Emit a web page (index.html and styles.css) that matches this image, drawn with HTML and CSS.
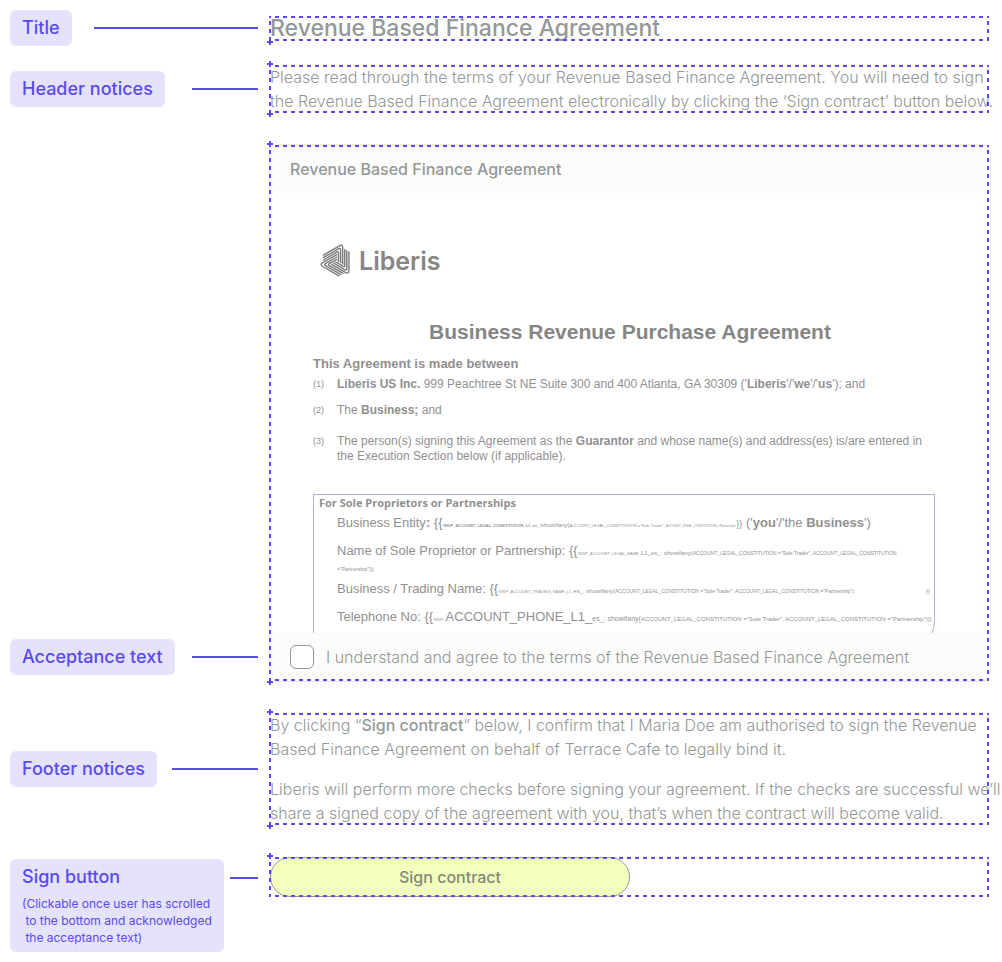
FILE: index.html
```html
<!DOCTYPE html>
<html lang="en">
<head>
<meta charset="UTF-8">
<meta name="viewport" content="width=device-width, initial-scale=1.0">
<title>Revenue Based Finance Agreement</title>
<link rel="stylesheet" href="styles.css">
</head>
<body>
<main class="page">
    <section class="row row-title">
        <div class="callout"><span class="tag">Title</span><i class="line line-title"></i></div>
        <div class="content outlined mark-bottom">
            <h1>Revenue Based Finance Agreement</h1>
        </div>
    </section>

    <section class="row row-header">
        <div class="callout"><span class="tag">Header notices</span><i class="line line-medium"></i></div>
        <div class="content outlined mark-top mark-bottom">
            <p>Please read through the terms of your Revenue Based Finance Agreement. You will need to sign<br>the Revenue Based Finance Agreement electronically by clicking the ‘Sign contract’ button below.</p>
        </div>
    </section>

    <section class="row row-card">
        <div class="callout"><span class="tag">Acceptance text</span><i class="line line-medium"></i></div>
        <div class="content outlined mark-top mark-bottom">
            <div class="card">
                <h2 class="card-header">Revenue Based Finance Agreement</h2>
                <div class="viewer">
                    <div class="logo">
                        <svg width="34" height="36" viewBox="-18 -18 36 36" fill="none" stroke="#7c7c7c" stroke-width="1.5">
                            <defs>
                                <g id="arm">
                                    <path d="M-15 -5.9L2.5 -16Q6 -18 6 -14V3.7"/>
                                    <path d="M-15 -3.3L1.8 -13Q3.8 -14.2 3.8 -11.5V2.4"/>
                                    <path d="M-15 -0.8L0.2 -9.6Q1.6 -10.4 1.6 -8.5V1.2"/>
                                </g>
                            </defs>
                            <use href="#arm"/>
                            <use href="#arm" transform="rotate(120)"/>
                            <use href="#arm" transform="rotate(240)"/>
                        </svg>
                        <span>Liberis</span>
                    </div>
                    <h3>Business Revenue Purchase Agreement</h3>
                    <h4>This Agreement is made between</h4>
                    <ol class="parties">
                        <li><span class="num">(1)</span><span><b>Liberis US Inc.</b> 999 Peachtree St NE Suite 300 and 400 Atlanta, GA 30309 ('<b>Liberis</b>'/'<b>we</b>'/'<b>us</b>'); and</span></li>
                        <li><span class="num">(2)</span><span>The <b>Business;</b> and</span></li>
                        <li><span class="num">(3)</span><span>The person(s) signing this Agreement as the <b>Guarantor</b> and whose name(s) and address(es) is/are entered in<br>the Execution Section below (if applicable).</span></li>
                    </ol>
                    <div class="details">
                        <h5>For Sole Proprietors or Partnerships</h5>
                        <p>Business Entity<b>:</b> {{<small class="t4"><b>!SKIP_ACCOUNT_LEGAL_CONSTITUTION_L1_es_</b></small><small class="t6">:showifany(</small><small class="t4">ACCOUNT_LEGAL_CONSTITUTION ="Sole Trader", </small><small class="t3">ACCOUNT_LEGAL_CONSTITUTION ="Partnership"</small><small class="t9">}}</small> ('<b>you</b>'/'the <b>Business</b>')</p>
                        <p class="wrapped">Name of Sole Proprietor or Partnership: {{<small class="t4">!SKIP_ACCOUNT_LEGAL_NAME_</small><small class="t6">L1_es_: showifany(</small><small class="t5">ACCOUNT_LEGAL_CONSTITUTION ="Sole Trader", ACCOUNT_LEGAL_CONSTITUTION</small><br><small class="t5">="Partnership")}}</small></p>
                        <p class="spread"><span>Business / Trading Name: {{<small class="t4">!SKIP_ACCOUNT_TRADING_NAME_L1_</small><small class="t6">es_: showifany(</small><small class="t5">ACCOUNT_LEGAL_CONSTITUTION ="Sole Trader", ACCOUNT_LEGAL_CONSTITUTION ="Partnership")</small></span><small class="t6">}}</small></p>
                        <p>Telephone No: {{<small class="t4">!SKIP_</small>ACCOUNT_PHONE_L1_<small class="t7">es_: showifany(</small><small class="t6">ACCOUNT_LEGAL_CONSTITUTION ="Sole Trader", ACCOUNT_LEGAL_CONSTITUTION ="Partnership")}}</small></p>
                    </div>
                </div>
                <label class="accept"><input type="checkbox">I understand and agree to the terms of the Revenue Based Finance Agreement</label>
            </div>
        </div>
    </section>

    <section class="row">
        <div class="callout"><span class="tag">Footer notices</span><i class="line line-footer"></i></div>
        <div class="content outlined mark-top mark-bottom">
            <p>By clicking “<b>Sign contract</b>” below, I confirm that I Maria Doe am authorised to sign the Revenue<br>Based Finance Agreement on behalf of Terrace Cafe to legally bind it.</p>
            <p>Liberis will perform more checks before signing your agreement. If the checks are successful we’ll<br>share a signed copy of the agreement with you, that’s when the contract will become valid.</p>
        </div>
    </section>

    <section class="row row-sign">
        <div class="callout">
            <span class="tag">Sign button
                <small>(Clickable once user has scrolled<br>&nbsp;to the bottom and acknowledged<br>&nbsp;the acceptance text)</small>
            </span>
            <i class="line line-sign"></i>
        </div>
        <div class="content outlined mark-top">
            <button type="button" class="sign">Sign contract</button>
        </div>
    </section>
</main>
</body>
</html>
```

FILE: styles.css
```css
* {
    box-sizing: border-box;
}
body {
    margin: 0;
    background: #fff;
    color: #939899;
    font-family: Inter, "Liberation Sans", sans-serif;
    font-size: 16px;
    line-height: 24px;
}
h1, h2, h3, h4, h5, p, ol {
    margin: 0;
    padding: 0;
}
.page {
    display: flex;
    flex-direction: column;
    gap: 32px;
    padding: 10px 12px 10px 10px;
}

/* annotation column on the left, interface on the right */
.row {
    display: flex;
    align-items: center;
    gap: 12px;
}
.callout {
    flex: 0 0 248px;
    display: flex;
    align-items: center;
    justify-content: space-between;
}
.content {
    flex: 1;
    min-width: 0;
    white-space: nowrap;
    font-weight: 300;
}
.content p + p {
    margin-top: 16px;
}
.content b {
    font-weight: 500;
}
.tag {
    padding: 6px 12px;
    border-radius: 6px;
    background: #e5e2fc;
    color: #594af0;
    font-size: 18px;
    font-weight: 500;
}
.tag small {
    display: block;
    margin-top: 6px;
    font-size: 12px;
    font-weight: 400;
    line-height: 17px;
}
.line {
    height: 2px;
    background: #594af0;
}
.line-title { width: 164px; }
.line-medium { width: 66px; }
.line-footer { width: 86px; }
.line-sign { width: 28px; }

.row-title {
    align-items: flex-start;
    margin-bottom: -13px;
}
.row-title .content {
    margin-top: 6px;
}
.row-card {
    align-items: flex-end;
}
.row-card .callout {
    padding-bottom: 6px;
}
.row-sign,
.row-sign .callout {
    align-items: flex-start;
}
.row-sign .callout {
    padding-top: 2px;
}
.row-sign .line {
    margin-top: 18px;
}

/* dashed frame drawn over the interface */
.outlined {
    position: relative;
}
.outlined::before {
    content: "";
    position: absolute;
    z-index: 1;
    inset: 0 1px 0 -1px;
    pointer-events: none;
    --h: linear-gradient(90deg, #594af0 50%, transparent 50%);
    --v: linear-gradient(#594af0 50%, transparent 50%);
    background:
        var(--h) 6px 0 / 8px 2px repeat-x,
        var(--h) 6px 100% / 8px 2px repeat-x,
        var(--v) 0 5px / 2px 8px repeat-y,
        var(--v) 100% 5px / 2px 8px repeat-y;
}
.outlined::after {
    content: "";
    position: absolute;
    z-index: 1;
    left: -3px;
    top: -4px;
    bottom: -4px;
    width: 6px;
    pointer-events: none;
    --c: linear-gradient(#594af0, #594af0);
    background-repeat: no-repeat;
}
.mark-top::after {
    background-image: var(--c), var(--c);
    background-size: 6px 2px, 2px 6px;
    background-position: 0 2px, 2px 0;
}
.mark-bottom::after {
    background-image: var(--c), var(--c);
    background-size: 6px 2px, 2px 6px;
    background-position: 0 calc(100% - 2px), 2px 100%;
}
.mark-top.mark-bottom::after {
    background-image: var(--c), var(--c), var(--c), var(--c);
    background-size: 6px 2px, 2px 6px, 6px 2px, 2px 6px;
    background-position: 0 2px, 2px 0, 0 calc(100% - 2px), 2px 100%;
}

h1 {
    font-size: 23px;
    font-weight: 500;
    line-height: 25px;
}

.card {
    border-radius: 10px;
    box-shadow: 0 0 0 1px #e9e9e4;
    overflow: hidden;
}
.card-header {
    padding: 12px 20px;
    background: #fcfcfa;
    font-size: 16px;
    font-weight: 500;
}
.accept {
    display: flex;
    align-items: center;
    gap: 12px;
    padding: 12px 20px;
    background: #fcfcfa;
}
.accept input {
    appearance: none;
    width: 24px;
    height: 24px;
    margin: 0;
    border: 1px solid #939899;
    border-radius: 6px;
    background: #fff;
}

/* scrolling contract document */
.viewer {
    height: 440px;
    padding: 50px 55px 0 43px;
    overflow: hidden;
    color: #909090;
    font-family: "Liberation Sans", Arial, sans-serif;
    font-size: 12px;
    font-weight: 400;
    line-height: 15px;
}
.viewer b {
    font-weight: 700;
}
.logo {
    display: flex;
    align-items: center;
    gap: 5px;
    padding-left: 7px;
    color: #868686;
    font-family: Inter, sans-serif;
    font-size: 25px;
    font-weight: 600;
    line-height: 36px;
}
.viewer h3 {
    margin-top: 40px;
    padding-left: 12px;
    color: #868686;
    font-size: 21px;
    line-height: 26px;
    text-align: center;
}
.viewer h4 {
    margin-top: 11px;
    font-size: 13px;
    line-height: 16px;
}
.parties {
    list-style: none;
}
.parties li {
    display: flex;
    margin-top: 5px;
}
.parties li + li {
    margin-top: 11px;
}
.parties li:last-child {
    margin-top: 16px;
}
.num {
    flex: 0 0 24px;
    font-size: 9px;
}
.details {
    height: 160px;
    margin-top: 30px;
    padding: 1px 4px 0 23px;
    border: 1px solid #b5acd9;
    border-bottom-right-radius: 24px 36px;
    font-size: 13px;
    line-height: 16px;
}
.details h5 {
    margin: 0 0 5px -18px;
    font-family: "Open Sans", sans-serif;
    font-size: 11px;
    line-height: 14px;
}
.details p + p {
    margin-top: 12px;
}
.details .wrapped + p {
    margin-top: 6px;
}
.details small {
    line-height: 0;
}
.spread {
    display: flex;
    justify-content: space-between;
    align-items: baseline;
}
.t3 { font-size: 3px; }
.t4 { font-size: 4px; }
.t5 { font-size: 5px; }
.t6 { font-size: 6px; }
.t7 { font-size: 7px; }
.t9 { font-size: 9px; }

.sign {
    display: block;
    width: 50%;
    height: 40px;
    border: 1px solid #939899;
    border-radius: 20px;
    background: #f3ffbd;
    color: #85887a;
    font-family: inherit;
    font-size: 16px;
    font-weight: 500;
}
```
